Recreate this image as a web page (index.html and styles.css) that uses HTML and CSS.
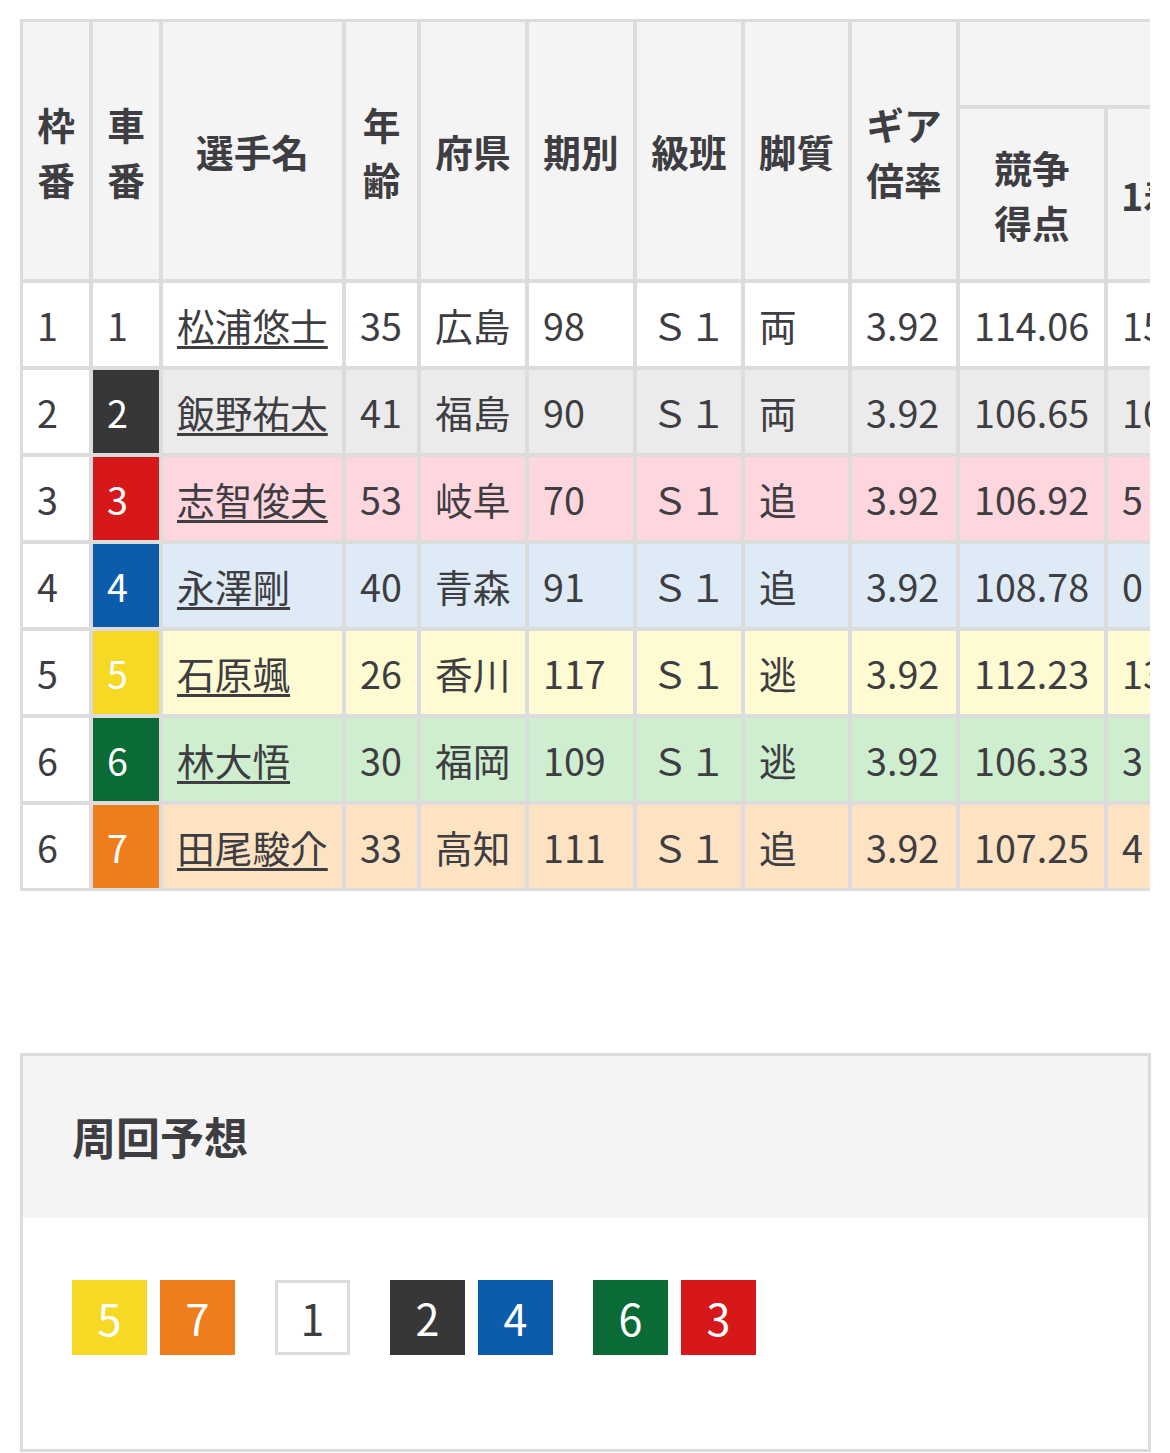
FILE: index.html
```html
<!DOCTYPE html>
<html lang="ja">
<head>
<meta charset="utf-8">
<title>出走表</title>
<link rel="stylesheet" href="styles.css">
</head>
<body>
<div class="page">
  <div class="table-wrap">
    <table class="race">
      <colgroup>
        <col class="c-waku"><col class="c-sha"><col class="c-name"><col class="c-age">
        <col class="c-mid"><col class="c-mid"><col class="c-mid"><col class="c-leg"><col class="c-mid">
        <col class="c-score"><col class="c-res"><col class="c-res"><col class="c-res"><col class="c-res"><col class="c-res"><col class="c-res">
      </colgroup>
      <thead>
        <tr class="h1">
          <th rowspan="2">枠<br>番</th>
          <th rowspan="2">車<br>番</th>
          <th rowspan="2">選手名</th>
          <th rowspan="2">年<br>齢</th>
          <th rowspan="2">府県</th>
          <th rowspan="2">期別</th>
          <th rowspan="2">級班</th>
          <th rowspan="2">脚質</th>
          <th rowspan="2">ギア<br>倍率</th>
          <th colspan="7" class="group"><span class="group-label">直近4ヶ月の成績</span></th>
        </tr>
        <tr class="h2">
          <th>競争<br>得点</th>
          <th>1着</th>
          <th>2着</th>
          <th>3着</th>
          <th>着外</th>
          <th>勝率</th>
          <th>連対率</th>
        </tr>
      </thead>
      <tbody>
        <tr class="r1">
          <td class="waku">1</td><td class="sha sha1">1</td><td><a href="#">松浦悠士</a></td><td>35</td><td>広島</td><td>98</td><td>Ｓ１</td><td>両</td><td>3.92</td><td>114.06</td><td>15</td><td>8</td><td>4</td><td>6</td><td>45.4</td><td>69.6</td>
        </tr>
        <tr class="r2">
          <td class="waku">2</td><td class="sha sha2">2</td><td><a href="#">飯野祐太</a></td><td>41</td><td>福島</td><td>90</td><td>Ｓ１</td><td>両</td><td>3.92</td><td>106.65</td><td>10</td><td>5</td><td>3</td><td>9</td><td>37.0</td><td>55.5</td>
        </tr>
        <tr class="r3">
          <td class="waku">3</td><td class="sha sha3">3</td><td><a href="#">志智俊夫</a></td><td>53</td><td>岐阜</td><td>70</td><td>Ｓ１</td><td>追</td><td>3.92</td><td>106.92</td><td>5</td><td>6</td><td>4</td><td>11</td><td>19.2</td><td>42.3</td>
        </tr>
        <tr class="r4">
          <td class="waku">4</td><td class="sha sha4">4</td><td><a href="#">永澤剛</a></td><td>40</td><td>青森</td><td>91</td><td>Ｓ１</td><td>追</td><td>3.92</td><td>108.78</td><td>0</td><td>7</td><td>5</td><td>10</td><td>0.0</td><td>31.8</td>
        </tr>
        <tr class="r5">
          <td class="waku">5</td><td class="sha sha5">5</td><td><a href="#">石原颯</a></td><td>26</td><td>香川</td><td>117</td><td>Ｓ１</td><td>逃</td><td>3.92</td><td>112.23</td><td>13</td><td>4</td><td>3</td><td>7</td><td>48.1</td><td>62.9</td>
        </tr>
        <tr class="r6">
          <td class="waku">6</td><td class="sha sha6">6</td><td><a href="#">林大悟</a></td><td>30</td><td>福岡</td><td>109</td><td>Ｓ１</td><td>逃</td><td>3.92</td><td>106.33</td><td>3</td><td>4</td><td>2</td><td>15</td><td>12.5</td><td>29.1</td>
        </tr>
        <tr class="r7">
          <td class="waku">6</td><td class="sha sha7">7</td><td><a href="#">田尾駿介</a></td><td>33</td><td>高知</td><td>111</td><td>Ｓ１</td><td>追</td><td>3.92</td><td>107.25</td><td>4</td><td>5</td><td>6</td><td>9</td><td>16.6</td><td>37.5</td>
        </tr>
      </tbody>
    </table>
  </div>

  <section class="lap">
    <h2 class="lap-title">周回予想</h2>
    <div class="lap-body">
      <div class="lap-group">
        <span class="car car5">5</span><span class="car car7">7</span>
      </div>
      <div class="lap-group">
        <span class="car car1">1</span>
      </div>
      <div class="lap-group">
        <span class="car car2">2</span><span class="car car4">4</span>
      </div>
      <div class="lap-group">
        <span class="car car6">6</span><span class="car car3">3</span>
      </div>
    </div>
  </section>
</div>
</body>
</html>
```

FILE: styles.css
```css
html, body {
  margin: 0;
  padding: 0;
  background: #ffffff;
}

body {
  font-family: "Noto Sans CJK JP", "Noto Sans", sans-serif;
  color: #3d3d42;
}

.page {
  padding: 19px 20px 0;
}

.table-wrap {
  width: 1130px;
  overflow: hidden;
}

.race {
  table-layout: fixed;
  border-collapse: separate;
  border-spacing: 0;
  border: 1px solid #dcdcdc;
  width: 1700px;
  font-size: 37.7px;
}

.c-waku { width: 70px; }
.c-sha { width: 70px; }
.c-name { width: 183px; }
.c-age { width: 75px; }
.c-mid { width: 108px; }
.c-leg { width: 107px; }
.c-score { width: 148px; }
.c-res { width: 117px; }

.race th,
.race td {
  box-sizing: border-box;
  border: 2px solid #dcdcdc;
  padding: 0 13px 0 14px;
  line-height: 55px;
  vertical-align: middle;
  white-space: nowrap;
  overflow: hidden;
}

.race th {
  background: #f4f4f4;
  font-weight: 700;
  text-align: center;
  padding: 0;
}

.race .h1 .group {
  height: 87px;
}

.race .h2 th {
  height: 174px;
}

.race .h2 th:nth-child(n+2) {
  text-align: left;
  padding-left: 13px;
}

.group-label {
  display: block;
  padding-left: 600px;
}

.race td {
  height: 87px;
  text-align: left;
  font-weight: 400;
}

.race td a {
  color: #3d3d42;
  text-decoration: underline;
  text-decoration-thickness: 3px;
  text-underline-offset: 5px;
}

.r1 td { background: #ffffff; }
.r2 td { background: #ebebeb; }
.r3 td { background: #fed6de; }
.r4 td { background: #deebf7; }
.r5 td { background: #fefbd2; }
.r6 td { background: #cfeecf; }
.r7 td { background: #fee3c3; }

.race td.waku { background: #ffffff; }
.race td.sha { color: #ffffff; }
.race td.sha1 { background: #ffffff; color: #3d3d42; }
.race td.sha2 { background: #373737; }
.race td.sha3 { background: #d7181b; }
.race td.sha4 { background: #0c5cab; }
.race td.sha5 { background: #f5d925; }
.race td.sha6 { background: #0b6b36; }
.race td.sha7 { background: #ee7d1e; }

.lap {
  width: 1131px;
  box-sizing: border-box;
  margin-top: 162px;
  border: 3px solid #dcdcdc;
}

.lap-title {
  margin: 0;
  background: #f4f4f4;
  padding: 49px 50px 51px 49px;
  font-size: 44px;
  font-weight: 700;
  line-height: 62px;
}

.lap-body {
  display: flex;
  gap: 40px;
  padding: 62px 50px 94px 49px;
}

.lap-group {
  display: flex;
  gap: 13px;
}

.car {
  box-sizing: border-box;
  width: 75px;
  height: 75px;
  display: flex;
  align-items: center;
  justify-content: center;
  font-size: 43px;
  color: #ffffff;
  line-height: 1;
}

.car1 { background: #ffffff; border: 3px solid #dcdcdc; color: #3d3d42; }
.car2 { background: #373737; }
.car3 { background: #d7181b; }
.car4 { background: #0c5cab; }
.car5 { background: #f5d925; }
.car6 { background: #0b6b36; }
.car7 { background: #ee7d1e; }
```
